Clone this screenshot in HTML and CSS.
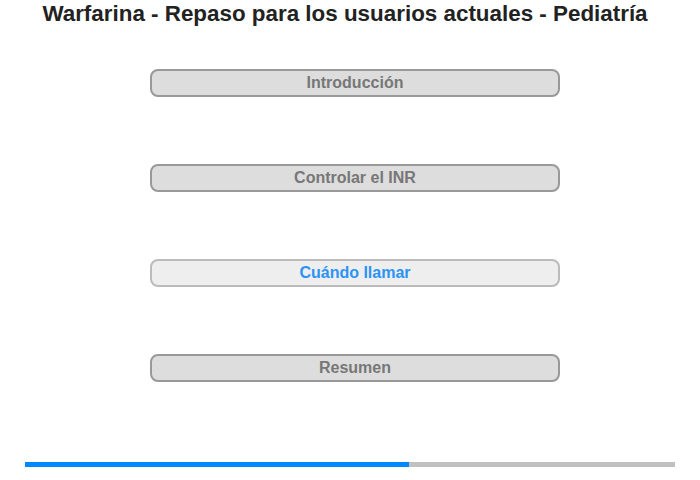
FILE: index.html
```html
<!DOCTYPE html>
<html lang="es">
<head>
<meta charset="utf-8">
<link rel="stylesheet" href="styles.css">
</head>
<body>
<div class="page">
  <h1 class="title">Warfarina - Repaso para los usuarios actuales - Pediatría</h1>
  <div class="menu">
    <div class="item">Introducción</div>
    <div class="item">Controlar el INR</div>
    <div class="item active">Cuándo llamar</div>
    <div class="item">Resumen</div>
  </div>
  <div class="progress"><div class="fill" style="width:384px"></div></div>
</div>
</body>
</html>
```
FILE: styles.css
```css
html, body {
  margin: 0;
  padding: 0;
  background: #fff;
}
.page {
  width: 700px;
  height: 480px;
  font-family: "Liberation Sans", Arial, sans-serif;
  display: flex;
  flex-direction: column;
  align-items: center;
}
.title {
  margin: 1px 10px 0 0;
  font-size: 22.4px;
  line-height: 26px;
  font-weight: bold;
  color: #222;
  text-align: center;
}
.menu {
  margin-top: 42px;
  margin-left: 10px;
  display: flex;
  flex-direction: column;
  gap: 67px;
}
.item {
  box-sizing: border-box;
  width: 410px;
  height: 28px;
  border: 2px solid #999;
  border-radius: 8px;
  background: #ddd;
  color: #777;
  font-size: 16px;
  font-weight: bold;
  text-align: center;
  line-height: 24px;
}
.item.active {
  background: #eee;
  border-color: #bbb;
  color: #2a93f5;
}
.progress {
  margin-top: 80px;
  width: 650px;
  height: 5px;
  background: #c0c0c0;
}
.fill {
  height: 100%;
  background: #0088ff;
}
```
